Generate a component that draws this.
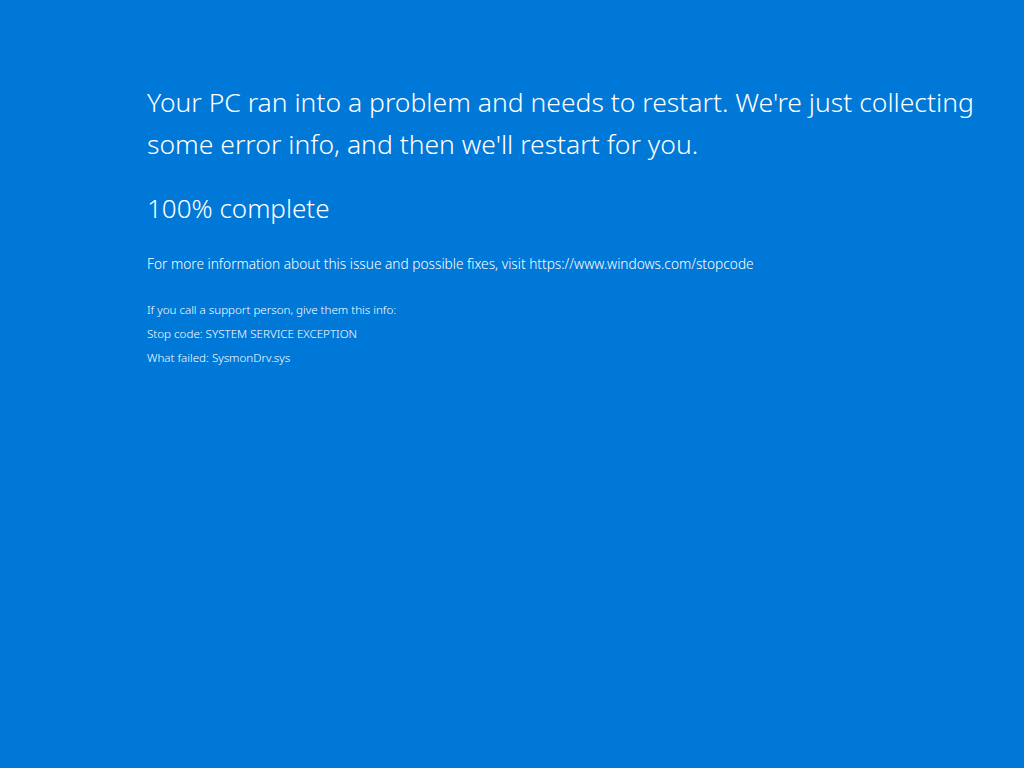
export default function App() {
  return (
    <div className="w-[1024px] h-[768px] bg-[#0078d7] text-white" style={{ fontFamily: '"Noto Sans", "Open Sans", sans-serif' }}>
      <div className="pl-[147px] pt-[81px] pr-[30px]">
        <p className="text-[26.5px] leading-[42px] font-light">Your PC ran into a problem and needs to restart. We're just collecting some error info, and then we'll restart for you.</p>
        <p className="text-[26px] leading-[42px] font-light mt-[22px]">100% complete</p>
        <p className="text-[13.7px] leading-[20px] font-light mt-[25px]">For more information about this issue and possible fixes, visit https://www.windows.com/stopcode</p>
        <div className="mt-[24px] text-[11.6px] leading-[24px] font-light">
          <p>If you call a support person, give them this info:</p>
          <p>Stop code: SYSTEM SERVICE EXCEPTION</p>
          <p>What failed: SysmonDrv.sys</p>
        </div>
      </div>
    </div>
  );
}
